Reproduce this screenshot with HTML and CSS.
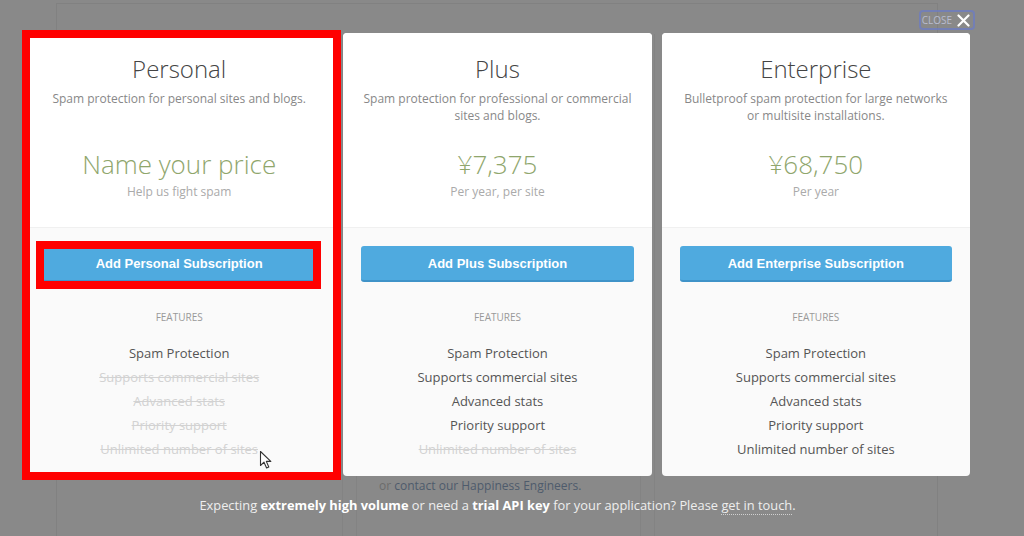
FILE: index.html
```html
<!DOCTYPE html>
<html lang="en">
<head>
    <meta charset="UTF-8">
    <meta name="viewport" content="width=device-width, initial-scale=1.0">
    <title>Akismet Plans</title>
    <link rel="stylesheet" href="styles.css">
</head>
<body>
    <!-- Page behind the overlay -->
    <div class="page">
        <div class="page-cols">
            <div class="page-col"></div>
            <div class="page-col page-col-mid">
                <p class="page-note">or <a href="#">contact our Happiness Engineers.</a></p>
            </div>
            <div class="page-col"></div>
        </div>
    </div>

    <!-- Plans modal -->
    <div class="modal">
        <div class="modal-top">
            <button class="close">CLOSE
                <svg width="13" height="13" viewBox="0 0 13 13"><path d="M1.5 1.5 L11.5 11.5 M11.5 1.5 L1.5 11.5" stroke="#fff" stroke-width="2.2" stroke-linecap="round"/></svg>
            </button>
        </div>

        <div class="plans">
            <div class="plan">
                <div class="plan-head">
                    <h2>Personal</h2>
                    <p class="plan-desc">Spam protection for personal sites and blogs.</p>
                    <div class="plan-price">Name your price</div>
                    <p class="plan-note">Help us fight spam</p>
                </div>
                <div class="plan-body">
                    <button class="plan-btn">Add Personal Subscription</button>
                    <h3>Features</h3>
                    <ul class="features">
                        <li>Spam Protection</li>
                        <li class="off">Supports commercial sites</li>
                        <li class="off">Advanced stats</li>
                        <li class="off">Priority support</li>
                        <li class="off">Unlimited number of sites</li>
                    </ul>
                </div>
            </div>

            <div class="plan">
                <div class="plan-head">
                    <h2>Plus</h2>
                    <p class="plan-desc">Spam protection for professional or commercial sites and blogs.</p>
                    <div class="plan-price">¥7,375</div>
                    <p class="plan-note">Per year, per site</p>
                </div>
                <div class="plan-body">
                    <button class="plan-btn">Add Plus Subscription</button>
                    <h3>Features</h3>
                    <ul class="features">
                        <li>Spam Protection</li>
                        <li>Supports commercial sites</li>
                        <li>Advanced stats</li>
                        <li>Priority support</li>
                        <li class="off">Unlimited number of sites</li>
                    </ul>
                </div>
            </div>

            <div class="plan">
                <div class="plan-head">
                    <h2>Enterprise</h2>
                    <p class="plan-desc">Bulletproof spam protection for large networks or multisite installations.</p>
                    <div class="plan-price">¥68,750</div>
                    <p class="plan-note">Per year</p>
                </div>
                <div class="plan-body">
                    <button class="plan-btn">Add Enterprise Subscription</button>
                    <h3>Features</h3>
                    <ul class="features">
                        <li>Spam Protection</li>
                        <li>Supports commercial sites</li>
                        <li>Advanced stats</li>
                        <li>Priority support</li>
                        <li>Unlimited number of sites</li>
                    </ul>
                </div>
            </div>
        </div>

        <p class="modal-foot">Expecting <b>extremely high volume</b> or need a <b>trial API key</b> for your application? Please <a href="#">get in touch</a>.</p>
    </div>

    <!-- Red annotation boxes -->
    <div class="mark mark-card"></div>
    <div class="mark mark-btn"></div>

    <svg class="cursor" width="14" height="20" viewBox="0 0 14 20">
        <path d="M1.5 1.5 L1.5 15.5 L5 12.2 L7.6 18 L9.8 17 L7.3 11.4 L11.8 11.4 Z" fill="#fff" stroke="#333" stroke-width="1.1" stroke-linejoin="round"/>
    </svg>
</body>
</html>
```

FILE: styles.css
```css
body {
    font-family: 'Open Sans', 'Liberation Sans', sans-serif;
    background-color: #898989;
    margin: 0;
    padding: 3px 0 0;
    height: 533px;
    overflow: hidden;
    position: relative;
}
.page {
    margin-left: 56px;
    width: 882px;
    height: 533px;
    border: 1px solid #818181;
    border-bottom: none;
    padding-top: 30px;
    box-sizing: border-box;
}
.page-cols {
    display: grid;
    grid-template-columns: 286px 285px 285px;
    column-gap: 13px;
    height: 100%;
}
.page-col {
    border-right: 1px solid #838383;
}
.page-col:last-child {
    border-right: none;
    border-left: 1px solid #838383;
}
.page-col-mid {
    border-left: 1px solid #838383;
    display: flex;
    flex-direction: column;
    justify-content: flex-end;
}
.page-note {
    margin: 0 0 42px 22px;
    font-size: 12px;
    line-height: 16px;
    color: #6c6c6c;
}
.page-note a {
    color: #4e5b6c;
    text-decoration: none;
}
.modal {
    position: absolute;
    top: 0;
    left: 25px;
    width: 945px;
}
.modal-top {
    height: 33px;
    display: flex;
    justify-content: flex-end;
    align-items: flex-start;
    padding-top: 10px;
    box-sizing: border-box;
    margin-right: -5px;
}
.close {
    display: flex;
    align-items: center;
    gap: 5px;
    height: 20px;
    padding: 0 3px 0 1px;
    background: none;
    border: 2px solid rgba(108, 124, 196, 0.75);
    border-radius: 4px;
    font-family: 'Open Sans', sans-serif;
    font-size: 10px;
    color: #b8bcd0;
    cursor: pointer;
}
.plans {
    display: grid;
    grid-template-columns: repeat(3, 1fr);
    gap: 10px;
}
.plan {
    background: #fafafa;
    border-radius: 4px;
    overflow: hidden;
    text-align: center;
}
.plan-head {
    background: white;
    height: 194px;
    box-sizing: border-box;
    padding: 20px 18px 0;
}
.plan-head h2 {
    margin: 0;
    font-weight: 300;
    font-size: 24px;
    line-height: 32px;
    color: #444;
}
.plan-desc {
    margin: 5px 0 0;
    min-height: 34px;
    font-size: 12px;
    line-height: 17px;
    color: #888;
}
.plan-price {
    margin-top: 23px;
    font-weight: 300;
    font-size: 26px;
    line-height: 34px;
    color: #8fa66c;
}
.plan-note {
    margin: 2px 0 0;
    font-size: 12px;
    line-height: 17px;
    color: #aaa;
}
.plan-body {
    border-top: 1px solid #f0f0f0;
    padding: 18px 18px 15px;
}
.plan-btn {
    display: block;
    width: 100%;
    height: 36px;
    background: #4faadf;
    border: none;
    border-bottom: 2px solid #3f93c8;
    border-radius: 3px;
    color: white;
    font-family: 'Liberation Sans', Arial, sans-serif;
    font-weight: bold;
    font-size: 13px;
    cursor: pointer;
}
.plan-body h3 {
    margin: 28px 0 0;
    font-weight: 400;
    font-size: 10px;
    line-height: 14px;
    text-transform: uppercase;
    color: #999;
}
.features {
    list-style: none;
    margin: 17px 0 0;
    padding: 0;
}
.features li {
    font-size: 13px;
    line-height: 24px;
    color: #555;
}
.features li.off {
    color: #d2d2d2;
    text-decoration: line-through;
}
.modal-foot {
    margin: 19px 0 0;
    text-align: center;
    font-size: 12.85px;
    line-height: 20px;
    color: #eee;
}
.modal-foot b {
    color: #fff;
}
.modal-foot a {
    color: #eee;
    text-decoration: none;
    border-bottom: 1px dotted #d0d0d0;
}
.mark {
    position: absolute;
    border: 8px solid #ff0000;
    box-sizing: border-box;
}
.mark-card {
    left: 22px;
    top: 30px;
    width: 319px;
    height: 450px;
}
.mark-btn {
    left: 36px;
    top: 241px;
    width: 285px;
    height: 48px;
}
.cursor {
    position: absolute;
    left: 259px;
    top: 450px;
}
```
